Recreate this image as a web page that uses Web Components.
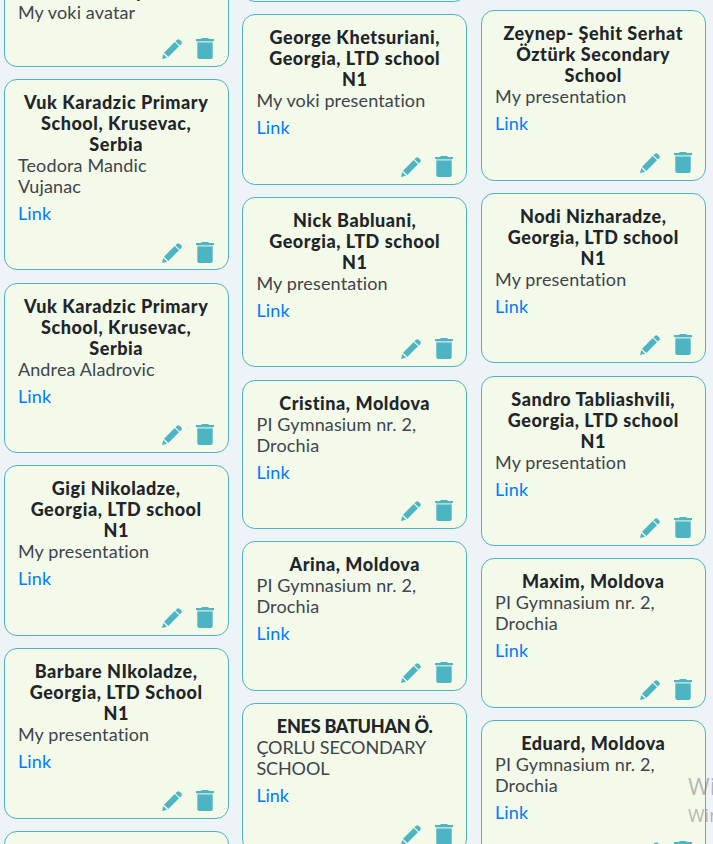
<!DOCTYPE html>
<html lang="en">
<head>
<meta charset="utf-8">
<title>Students</title>
<style>
  html, body {
    height: 100%;
    margin: 0;
    overflow: hidden;
  }
  body {
    background: #eef3f8;
    font-family: Lato, "Open Sans", sans-serif;
  }
</style>
</head>
<body>
<card-board>
  <card-column style="--shift: -31.6px">
    <student-card><b slot="name">Turkey</b>My voki avatar</student-card>
    <student-card link><b slot="name">Vuk Karadzic Primary<br>School, Krusevac,<br>Serbia</b>Teodora Mandic<br>Vujanac</student-card>
    <student-card link><b slot="name">Vuk Karadzic Primary<br>School, Krusevac,<br>Serbia</b>Andrea Aladrovic</student-card>
    <student-card link><b slot="name">Gigi Nikoladze,<br>Georgia, LTD school<br>N1</b>My presentation</student-card>
    <student-card link><b slot="name">Barbare NIkoladze,<br>Georgia, LTD School<br>N1</b>My presentation</student-card>
    <student-card></student-card>
  </card-column>
  <card-column style="--shift: -54.4px">
    <student-card></student-card>
    <student-card link><b slot="name">George Khetsuriani,<br>Georgia, LTD school<br>N1</b>My voki presentation</student-card>
    <student-card link><b slot="name">Nick Babluani,<br>Georgia, LTD school<br>N1</b>My presentation</student-card>
    <student-card link><b slot="name">Cristina, Moldova</b>PI Gymnasium nr. 2,<br>Drochia</student-card>
    <student-card link><b slot="name">Arina, Moldova</b>PI Gymnasium nr. 2,<br>Drochia</student-card>
    <student-card link caps><b slot="name">ENES BATUHAN Ö.</b>ÇORLU SECONDARY<br>SCHOOL</student-card>
  </card-column>
  <card-column style="--shift: 10.3px">
    <student-card link><b slot="name">Zeynep- Şehit Serhat<br>Öztürk Secondary<br>School</b>My presentation</student-card>
    <student-card link><b slot="name">Nodi Nizharadze,<br>Georgia, LTD school<br>N1</b>My presentation</student-card>
    <student-card link><b slot="name">Sandro Tabliashvili,<br>Georgia, LTD school<br>N1</b>My presentation</student-card>
    <student-card link><b slot="name">Maxim, Moldova</b>PI Gymnasium nr. 2,<br>Drochia</student-card>
    <student-card link><b slot="name">Eduard, Moldova</b>PI Gymnasium nr. 2,<br>Drochia</student-card>
  </card-column>
</card-board>
<activation-mark><span slot="title">Wi</span>Win</activation-mark>

<script>
customElements.define('card-board', class CardBoard extends HTMLElement {
    constructor() {
        super();
        this.attachShadow({mode: 'open'}).innerHTML =
        `<style>
        :host {
          align-items: flex-start;
          display: flex;
          gap: 13.55px;
          height: 100%;
          overflow: hidden;
          padding-left: 3.9px;
        }
        </style>
        <slot></slot>`;
    }
});

customElements.define('card-column', class CardColumn extends HTMLElement {
    constructor() {
        super();
        this.attachShadow({mode: 'open'}).innerHTML =
        `<style>
        :host {
          display: flex;
          flex: none;
          flex-direction: column;
          gap: 12.3px;
          margin-top: var(--shift, 0);
          width: 225px;
        }
        </style>
        <slot></slot>`;
    }
});

customElements.define('edit-icon', class EditIcon extends HTMLElement {
    constructor() {
        super();
        this.attachShadow({mode: 'open'}).innerHTML =
        `<style>
        :host { display: block; height: 20px; width: 20px; }
        svg { display: block; }
        </style>
        <svg width="20" height="20" viewBox="0 0 20 20" fill="currentColor">
          <path d="M0 20 1.3 14.9 5.1 18.7Z"/>
          <path d="M2 13.7 12.7 3 17 7.3 6.3 18Z"/>
          <path d="M13.5 2.2 15 .7Q16.3-.4 17.6.7L19.3 2.4Q20.4 3.7 19.3 5L17.8 6.5Z"/>
        </svg>`;
    }
});

customElements.define('trash-icon', class TrashIcon extends HTMLElement {
    constructor() {
        super();
        this.attachShadow({mode: 'open'}).innerHTML =
        `<style>
        :host { display: block; height: 21px; width: 18px; }
        svg { display: block; }
        </style>
        <svg width="18" height="21" viewBox="0 0 18 21" fill="currentColor">
          <path d="M0 1H5Q5.5 0 6.5 0H11.5Q12.5 0 13 1H18V3H0Z"/>
          <path d="M1.3 4.5H16.7V19Q16.7 21 14.7 21H3.3Q1.3 21 1.3 19Z"/>
          <path opacity=".4" d="M1 3H17V4.5H1Z"/>
        </svg>`;
    }
});

customElements.define('student-card', class StudentCard extends HTMLElement {
    constructor() {
        super();
        const link = this.hasAttribute('link') ? '<div class="link">Link</div>' : '';
        this.attachShadow({mode: 'open'}).innerHTML =
        `<style>
        :host {
          background: #f3faea;
          border: 1px solid #4cb4c3;
          border-radius: 13px;
          box-sizing: border-box;
          color: #3e444b;
          display: flex;
          flex-direction: column;
          font-size: 18px;
          letter-spacing: 0.14px;
          line-height: 21px;
          padding: 12px 13.45px 6.9px 13px;
        }
        :host([caps]) {
          --name-spacing: -0.25px;
          letter-spacing: -0.12px;
        }
        .name {
          color: #212529;
          letter-spacing: var(--name-spacing, 0.55px);
          text-align: center;
          white-space: nowrap;
        }
        .name ::slotted(b) {
          font-weight: 900;
        }
        .link {
          color: #007bff;
          height: 21px;
          margin-top: 6px;
        }
        .actions {
          align-items: flex-end;
          color: #4cb4c3;
          display: flex;
          gap: 14px;
          justify-content: flex-end;
          margin-top: 14.5px;
        }
        .link + .actions {
          margin-top: 17.5px;
        }
        </style>
        <div class="name"><slot name="name"></slot></div>
        <div class="text"><slot></slot></div>
        ${link}
        <div class="actions"><edit-icon></edit-icon><trash-icon></trash-icon></div>`;
    }
});

// System watermark that floats over the bottom right corner.
customElements.define('activation-mark', class ActivationMark extends HTMLElement {
    constructor() {
        super();
        this.attachShadow({mode: 'open'}).innerHTML =
        `<style>
        :host {
          color: rgba(125, 125, 125, 0.55);
          font: 18px/24px "Open Sans", sans-serif;
          left: 688px;
          overflow: hidden;
          pointer-events: none;
          position: absolute;
          top: 769px;
          width: 25px;
        }
        .title {
          font-size: 23.5px;
          line-height: 34px;
        }
        </style>
        <div class="title"><slot name="title"></slot></div>
        <slot></slot>`;
    }
});
</script>
</body>
</html>
